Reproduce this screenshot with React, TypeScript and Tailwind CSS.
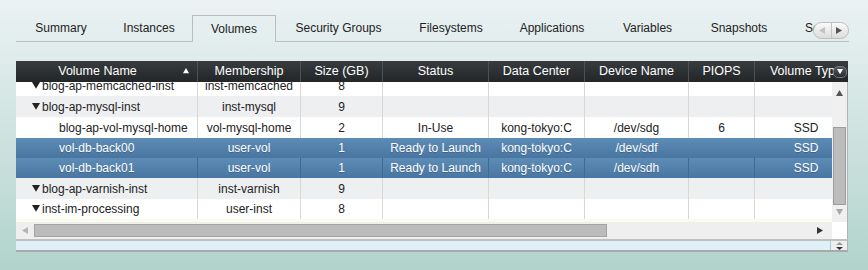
import React from "react";

type Row = {
  name: string;
  kind: "group" | "child";
  cells: string[];
  h: string;
  sel?: "a" | "b";
};

const TABS = [
  { label: "Summary", w: "w-[90px] justify-center" },
  { label: "Instances", w: "w-[86px] justify-center" },
  { label: "Volumes", w: "w-[84px] justify-center", active: true },
  { label: "Security Groups", w: "w-[125px] justify-center" },
  { label: "Filesystems", w: "w-[100px] justify-center" },
  { label: "Applications", w: "w-[102px] justify-center" },
  { label: "Variables", w: "w-[89px] justify-center" },
  { label: "Snapshots", w: "w-[94px] justify-center" },
  { label: "Scripts", w: "w-[90px] pl-[19px]" },
];

const COL_W = [
  "w-[182px]",
  "w-[103px]",
  "w-[82px]",
  "w-[106px]",
  "w-[96px]",
  "w-[104px]",
  "w-[66px]",
  "w-[102px]",
];

const HEADERS = [
  "Volume Name",
  "Membership",
  "Size (GB)",
  "Status",
  "Data Center",
  "Device Name",
  "PIOPS",
  "Volume Type",
];

const ROWS: Row[] = [
  { name: "blog-ap-memcached-inst", kind: "group", cells: ["inst-memcached", "8", "", "", "", "", ""], h: "h-[21px]" },
  { name: "blog-ap-mysql-inst", kind: "group", cells: ["inst-mysql", "9", "", "", "", "", ""], h: "h-[21px]" },
  { name: "blog-ap-vol-mysql-home", kind: "child", cells: ["vol-mysql-home", "2", "In-Use", "kong-tokyo:C", "/dev/sdg", "6", "SSD"], h: "h-[21px]" },
  { name: "vol-db-back00", kind: "child", cells: ["user-vol", "1", "Ready to Launch", "kong-tokyo:C", "/dev/sdf", "", "SSD"], h: "h-[20px]", sel: "a" },
  { name: "vol-db-back01", kind: "child", cells: ["user-vol", "1", "Ready to Launch", "kong-tokyo:C", "/dev/sdh", "", "SSD"], h: "h-[20px]", sel: "b" },
  { name: "blog-ap-varnish-inst", kind: "group", cells: ["inst-varnish", "9", "", "", "", "", ""], h: "h-[21px]" },
  { name: "inst-im-processing", kind: "group", cells: ["user-inst", "8", "", "", "", "", ""], h: "h-[20px]" },
];

function Tri({ dir, color, size = 7 }: { dir: "up" | "down" | "left" | "right"; color: string; size?: number }) {
  const pts = {
    up: "0,6 7,6 3.5,0",
    down: "0,0 7,0 3.5,6",
    left: "6,0 6,7 0,3.5",
    right: "0,0 0,7 6,3.5",
  }[dir];
  return (
    <svg width={size} height={size} viewBox="0 0 7 7" className="shrink-0">
      <polygon points={pts} fill={color} />
    </svg>
  );
}

export default function App() {
  return (
    <div className="w-[868px] h-[270px] overflow-hidden bg-gradient-to-b from-[#ebf2f3] to-[#b1d3cc] pt-[15px] pl-[16px] font-['Liberation_Sans',Arial,sans-serif] text-[12px] text-[#222]">
      {/* tab strip */}
      <div className="relative flex w-[833px] h-[27px] overflow-hidden">
        {TABS.map((t) => (
          <div
            key={t.label}
            className={`${t.w} shrink-0 h-full flex items-center whitespace-nowrap ${
              t.active ? "border border-b-0 border-[#bdbdbd]" : "border-b border-[#bdbdbd]"
            }`}
          >
            {t.label}
          </div>
        ))}
        <div className="flex-1 border-b border-[#bdbdbd]" />
        <div className="absolute right-0 top-[7px] w-[36px] h-[17px] rounded-full border border-[#bdbdbd] bg-gradient-to-b from-[#fafafa] to-[#dcdcdc] flex">
          <div className="flex-1 flex items-center justify-center border-r border-[#c4c4c4]">
            <Tri dir="left" color="#c2c2c2" />
          </div>
          <div className="flex-1 flex items-center justify-center">
            <Tri dir="right" color="#555" />
          </div>
        </div>
      </div>

      {/* grid */}
      <div className="w-[832px] mt-[19px]">
        {/* header */}
        <div className="relative flex h-[21px] w-[832px] overflow-hidden bg-gradient-to-b from-[#383c3f] to-[#232628] text-white text-[12.5px]">
          {HEADERS.map((h, i) => (
            <div
              key={h}
              className={`${COL_W[i]} shrink-0 relative flex items-center justify-center whitespace-nowrap ${
                i < 7 ? "border-r border-[#4c5054]" : ""
              } ${i === 0 ? "pr-[18px]" : ""}`}
            >
              {h}
              {i === 0 && (
                <span className="absolute right-[8px] top-[7px]">
                  <Tri dir="up" color="#ffffff" size={6} />
                </span>
              )}
            </div>
          ))}
          <div className="absolute right-[1px] top-[5px] w-[14px] h-[12px] rounded-[5px] border border-[#75797d] bg-gradient-to-b from-[#55595c] to-[#2c2f31] flex items-center justify-center">
            <Tri dir="down" color="#ffffff" size={6} />
          </div>
        </div>

        {/* body + scrollbars */}
        <div className="flex">
          <div className="w-[816px] shrink-0">
            <div className="h-[137px] overflow-hidden bg-white">
              <div className="w-[841px] -mt-[7px]">
                {ROWS.map((r, ri) => {
                  const selected = !!r.sel;
                  const bg = selected
                    ? "bg-gradient-to-b from-[#5d8cb6] to-[#4876a1] text-white [text-shadow:0_1px_0_rgba(0,0,0,0.2)]"
                    : ri % 2 === 1
                    ? "bg-[#eeeff1]"
                    : "bg-white";
                  const sep =
                    r.sel === "a" ? "border-transparent" : r.sel === "b" ? "border-[#3f6a93]" : "border-[#d8d8d8]";
                  return (
                    <div key={r.name} className={`flex ${r.h} ${bg}`}>
                      <div className={`${COL_W[0]} shrink-0 flex items-center whitespace-nowrap border-r ${sep} ${
                        r.kind === "group" ? "pl-[16px] gap-[2px]" : "pl-[43px]"
                      }`}>
                        {r.kind === "group" && <Tri dir="down" color="#222" size={8} />}
                        {r.name}
                      </div>
                      {r.cells.map((c, ci) => (
                        <div
                          key={ci}
                          className={`${COL_W[ci + 1]} shrink-0 flex items-center justify-center whitespace-nowrap ${
                            ci < 6 ? `border-r ${sep}` : ""
                          }`}
                        >
                          {c}
                        </div>
                      ))}
                    </div>
                  );
                })}
              </div>
            </div>
            <div className="h-[3px] bg-[#fbfbea]" />
            <div className="h-[17px] bg-[#efefef] flex items-center pl-[6px] pr-[8px]">
              <Tri dir="left" color="#b5b5b5" />
              <div className="ml-[5px] w-[573px] h-[13px] bg-[#bcbcbc] border border-[#a3a3a3]" />
              <div className="flex-1" />
              <Tri dir="right" color="#333" />
            </div>
          </div>
          <div className="w-[16px] shrink-0 border-r border-[#b2b2b2] flex flex-col">
            <div className="h-[140px] bg-[#f0f0f0] flex flex-col items-center pt-[8px]">
              <Tri dir="up" color="#555" />
              <div className="mt-[30px] w-[13px] h-[78px] bg-[#bcbcbc] border border-[#9d9d9d]" />
              <div className="mt-[4px]">
                <Tri dir="down" color="#a8a8a8" />
              </div>
            </div>
            <div className="h-[17px] bg-white" />
          </div>
        </div>

        {/* footer bar */}
        <div className="flex h-[13px] border-t-2 border-b-2 border-t-[#c0c0c0] border-b-[#a9a9a9] border-r border-r-[#b2b2b2]">
          <div className="w-[815px] shrink-0 bg-[#dff0f8] border-r border-[#9fd0e6]" />
          <div className="flex-1 bg-[#eeeeee] flex flex-col items-center justify-center gap-[1px]">
            <svg width="7" height="8" viewBox="0 0 7 8">
              <polygon points="0,3 7,3 3.5,0" fill="#9a9a9a" />
              <polygon points="0,5 7,5 3.5,8" fill="#333" />
            </svg>
          </div>
        </div>
      </div>
    </div>
  );
}
